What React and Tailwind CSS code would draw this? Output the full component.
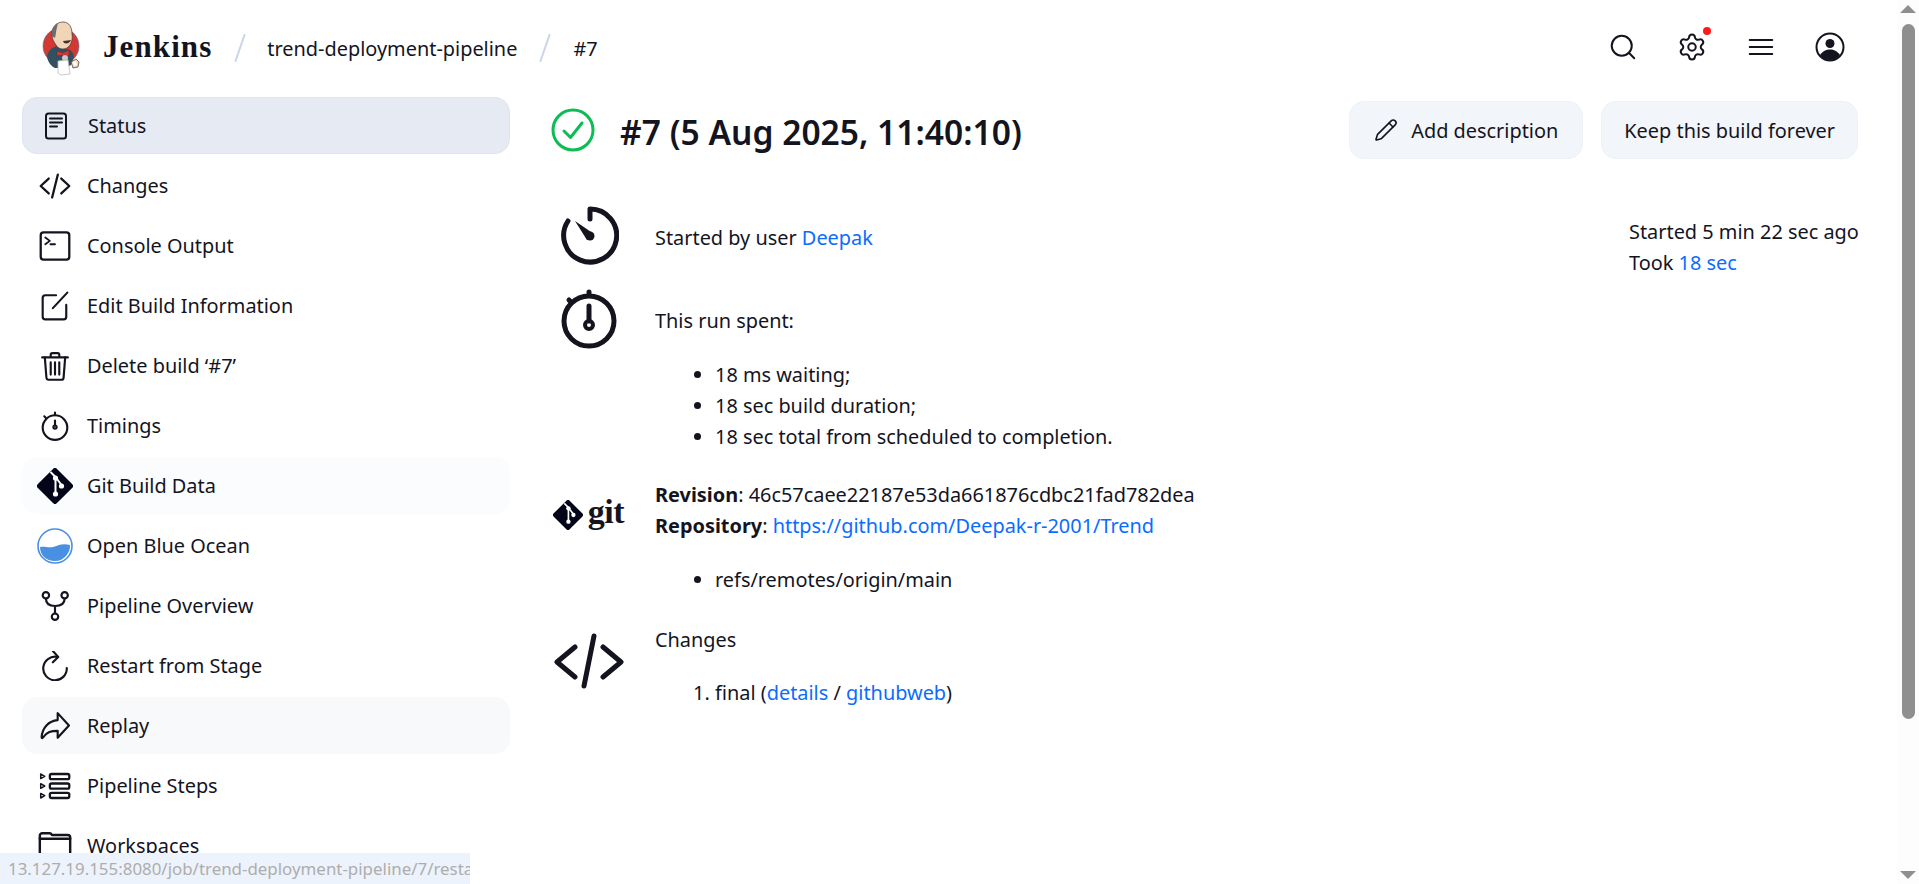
import React from 'react';
import { Search, Settings, Pencil } from 'lucide-react';

const FONT = "font-['Noto_Sans','Open_Sans',sans-serif]";

function JenkinsLogo() {
  return (
    <svg viewBox="0 0 38 55" className="w-[38px] h-[55px]">
      <circle cx="19" cy="25" r="18" fill="#d33833" stroke="#49728b" strokeWidth="0.6" />
      <path d="M5 36c1-7 6-10 10-11l9 3c4 0 7 2 8 8l-3 8-6 3-10 0c-4-2-7-6-8-11z" fill="#335061" />
      <path d="M10 14C9 6 15 1 21 1c6 0 9 5 9 12 1 6-1 11-5 14-4 2-9 1-11-3-2-3-4-6-4-10z" fill="#f0d6b7" stroke="#49312b" strokeWidth="0.7" />
      <path d="M10 15c-1-6 2-11 6-13-1 4-2 8-2 10l-1 5z" fill="#6d6b6d" />
      <path d="M21 20c3 0 6-1 8-1-1 3-4 4-7 3z" fill="#49312b" />
      <path d="M15 30l6 2 6-3 0 6-5-1-1 1-1-1-5 1z" fill="#d33833" stroke="#81100f" strokeWidth="0.4" />
      <circle cx="23" cy="37" r="3" fill="#e8e8e8" opacity="0.8" />
      <path d="M16 40l10-1 2 14-9 1-3-2z" fill="#fff" stroke="#bbb" strokeWidth="0.8" />
      <path d="M29 41l5-3 3 3-1 5-5 1z" fill="#f0d6b7" stroke="#49312b" strokeWidth="0.7" />
      <path d="M31 41l3-1 1 4-3 1z" fill="#fff" />
    </svg>
  );
}

function Icon({ children, className = 'w-7 h-7' }) {
  return (
    <svg viewBox="0 0 28 28" fill="none" stroke="#14141f" strokeWidth="2" strokeLinecap="round" strokeLinejoin="round" className={className}>
      {children}
    </svg>
  );
}

const Slash = () => (
  <svg viewBox="0 0 12 28" className="w-[12px] h-[28px]" stroke="#c9d5e6" strokeWidth="2" strokeLinecap="round">
    <path d="M10.500 1 1.500 27" />
  </svg>
);

const StatusIcon = () => (
  <Icon>
    <rect x="4" y="1.500" width="20" height="25" rx="2.500" />
    <path d="M8 6.500h12M8 10.500h12M8 14.500h7" />
  </Icon>
);
const CodeIcon = () => (
  <Icon className="w-[32px] h-[32px]">
    <path d="M8.500 7.500 1.500 14l7 6.500M19.500 7.500l7 6.500-7 6.500M16.500 4l-5 20" />
  </Icon>
);
const ConsoleIcon = () => (
  <Icon className="w-[32px] h-[32px]">
    <rect x="1.500" y="2" width="25" height="24" rx="2.500" />
    <path d="m5.500 6.500 4 3-4 3M10 12.500h4" strokeWidth="1.600" />
  </Icon>
);
const EditIcon = () => (
  <Icon className="w-[30px] h-[30px]">
    <path d="M15 4H5a2.500 2.500 0 0 0-2.500 2.500V24A2.500 2.500 0 0 0 5 26.500h17a2.500 2.500 0 0 0 2.500-2.500V13" />
    <path d="M12 16 25.500 1.500" />
  </Icon>
);
const TrashIcon = () => (
  <Icon className="w-[30px] h-[30px]">
    <path d="M2 6h24M10 6V3.500A1.500 1.500 0 0 1 11.500 2h5A1.500 1.500 0 0 1 18 3.500V6" />
    <path d="m4.500 6 1.500 19a2 2 0 0 0 2 1.800h12a2 2 0 0 0 2-1.800L23.500 6" />
    <path d="M10 10.500v11.500M14 10.500v11.500M18 10.500v11.500" />
  </Icon>
);
const TimerIcon = () => (
  <Icon className="w-[30px] h-[30px]">
    <circle cx="14" cy="15.500" r="11.500" />
    <path d="M14 4V1.500M5.500 6.500l-1.500-1.500M14 9v4" />
    <circle cx="14" cy="15" r="1.500" />
  </Icon>
);
const GitDiamond = ({ className = 'w-[36px] h-[36px]' }) => (
  <svg viewBox="0 0 36 36" className={className}>
    <path d="M16 .9 .9 16a2.800 2.800 0 0 0 0 4L16 35.100a2.800 2.800 0 0 0 4 0L35.100 20a2.800 2.800 0 0 0 0-4L20 .9a2.800 2.800 0 0 0-4 0z" fill="#05051a" />
    <path d="m13.500 4 5 5M18.500 9l6 8M18.500 9v17" stroke="#fff" strokeWidth="2" fill="none" />
    <circle cx="18.500" cy="10" r="2.600" fill="#fff" />
    <circle cx="24.500" cy="18" r="2.600" fill="#fff" />
    <circle cx="18.500" cy="26" r="2.600" fill="#fff" />
  </svg>
);
const OceanIcon = () => (
  <svg viewBox="0 0 36 36" className="w-[36px] h-[36px]">
    <circle cx="18" cy="18" r="17" fill="#fff" stroke="#4a90e2" strokeWidth="1.600" />
    <path d="M3 19c5-1 8 1 13 0s8-4 17-2c.5 8-6 16-15 16S3 27 3 19z" fill="#4a90e2" />
  </svg>
);
const PipelineIcon = () => (
  <Icon className="w-[30px] h-[30px]">
    <circle cx="5.500" cy="4" r="3" />
    <circle cx="23" cy="4" r="3" />
    <circle cx="14" cy="24" r="3" />
    <path d="M5.500 7c0 5 3 7 8.500 7s9-2 9-7M14 14v7" />
  </Icon>
);
const RestartIcon = () => (
  <Icon className="w-[30px] h-[30px]">
    <path d="M16 5.500A11 11 0 1 0 25 16" />
    <path d="m12 0 5 5.500-5 5" />
  </Icon>
);
const ReplayIcon = () => (
  <Icon className="w-[30px] h-[30px]">
    <path d="M16.500 2 27 13.500 16.500 25v-6.500c-6 0-10 1-14 6.500-.5.5-1 .3-1-.500C2 16 8 9 16.500 8.500z" />
  </Icon>
);
const StepsIcon = () => (
  <Icon className="w-[32px] h-[32px]">
    <rect x="9.500" y="3.500" width="17" height="4.500" rx="1.500" />
    <rect x="9.500" y="11.800" width="17" height="4.500" rx="1.500" />
    <rect x="9.500" y="20" width="17" height="4.500" rx="1.500" />
    <path d="m1.500 3.500 3.500 2-3.500 2zM1.500 12l3.500 2-3.500 2zM1.500 20.500l3.500 2-3.500 2z" strokeWidth="1.300" />
  </Icon>
);
const FolderIcon = () => (
  <Icon className="w-[34px] h-[34px]">
    <path d="M1.500 5.500a2 2 0 0 1 2-2h6c1 0 1.500.5 2 1.500h13a2 2 0 0 1 2 2v16a2 2 0 0 1-2 2h-21a2 2 0 0 1-2-2z" />
    <path d="M1.500 8h25" />
  </Icon>
);

const navItems = [
  { label: 'Status', icon: <StatusIcon />, bg: 'bg-[#e6eaf2] border border-[#dfe4ee]' },
  { label: 'Changes', icon: <CodeIcon /> },
  { label: 'Console Output', icon: <ConsoleIcon /> },
  { label: 'Edit Build Information', icon: <EditIcon /> },
  { label: 'Delete build ‘#7’', icon: <TrashIcon /> },
  { label: 'Timings', icon: <TimerIcon /> },
  { label: 'Git Build Data', icon: <GitDiamond />, bg: 'bg-[#fbfcfe]' },
  { label: 'Open Blue Ocean', icon: <OceanIcon /> },
  { label: 'Pipeline Overview', icon: <PipelineIcon /> },
  { label: 'Restart from Stage', icon: <RestartIcon /> },
  { label: 'Replay', icon: <ReplayIcon />, bg: 'bg-[#f8f9fb]' },
  { label: 'Pipeline Steps', icon: <StepsIcon /> },
  { label: 'Workspaces', icon: <FolderIcon /> },
];

function Link({ children }) {
  return <a className="text-[#0b6cff]">{children}</a>;
}

function BuildRow({ icon, className = '', children }) {
  return (
    <div className={`flex ${className}`}>
      <div className="w-[105px] shrink-0 flex justify-center items-start pr-[27px]">{icon}</div>
      <div className="flex-1">{children}</div>
    </div>
  );
}

export default function App() {
  return (
    <div className={`relative flex h-[884px] overflow-hidden bg-white text-[#14141f] text-[19.900px] leading-[31px] ${FONT}`}>
      <div className="flex-1 min-w-0 flex flex-col">
        {/* Header */}
        <header className="h-[96px] shrink-0 flex items-center pl-[42px] pr-[52px]">
          <JenkinsLogo />
          <span className="ml-[23px] font-['Liberation_Serif',serif] font-bold text-[31px] tracking-[1.100px] pb-[3px]">Jenkins</span>
          <span className="ml-[22px]"><Slash /></span>
          <span className="ml-[21px]">trend-deployment-pipeline</span>
          <span className="ml-[22px]"><Slash /></span>
          <span className="ml-[22px]">#7</span>
          <div className="ml-auto flex items-center gap-[39px] pb-[2px]">
            <Search className="w-[30px] h-[30px]" strokeWidth={1.600} />
            <div className="relative">
              <Settings className="w-[30px] h-[30px]" strokeWidth={1.600} />
              <span className="absolute -top-[5px] -right-[4px] w-[8px] h-[8px] rounded-full bg-[#ff1a1a]" />
            </div>
            <svg viewBox="0 0 28 28" className="w-[30px] h-[30px]" stroke="#14141f" strokeWidth="1.900" strokeLinecap="round">
              <path d="M3.500 7.500h21M3.500 14h21M3.500 20.500h21" />
            </svg>
            <svg viewBox="0 0 30 30" className="w-[30px] h-[30px]">
              <circle cx="15" cy="15" r="13.500" fill="#fff" stroke="#14141f" strokeWidth="2" />
              <circle cx="15" cy="11.500" r="4.500" fill="#14141f" />
              <path d="M5 23c3-4 6-5.500 10-5.500s7 1.500 10 5.500c-2.500 3-6 5-10 5s-7.500-2-10-5z" fill="#14141f" />
            </svg>
          </div>
        </header>

        <div className="flex flex-1 min-h-0">
          {/* Sidebar */}
          <nav className="w-[550px] shrink-0 pl-[22px] pr-[40px] pt-[1px]">
            {navItems.map((item) => (
              <div key={item.label} className={`flex items-center h-[57px] mb-[3px] rounded-[15px] ${item.bg || ''}`}>
                <div className="w-[65px] flex justify-center shrink-0">{item.icon}</div>
                <span>{item.label}</span>
              </div>
            ))}
          </nav>

          {/* Main */}
          <main className="flex-1 min-w-0 pr-[39px]">
            <div className="flex items-center justify-between pt-[5px]">
              <div className="flex items-center">
                <svg viewBox="0 0 44 44" className="w-[44px] h-[44px] ml-[1px]" fill="none" stroke="#0dbc55" strokeLinecap="round" strokeLinejoin="round">
                  <circle cx="22" cy="22" r="20" strokeWidth="3" />
                  <path d="m13 23 6.500 6.500L31 15" strokeWidth="3" />
                </svg>
                <h1 className="ml-[25px] mt-[4px] text-[33.600px] leading-[44px] font-semibold">#7 (5 Aug 2025, 11:40:10)</h1>
              </div>
              <div className="flex gap-[18px]">
                <button className="h-[58px] px-[24px] flex items-center gap-[13px] rounded-[15px] bg-[#f2f5f9] border border-[#eef1f6]">
                  <Pencil className="w-[24px] h-[24px]" strokeWidth={1.600} />
                  Add description
                </button>
                <button className="h-[58px] px-[22px] rounded-[15px] bg-[#f2f5f9] border border-[#eef1f6]">Keep this build forever</button>
              </div>
            </div>

            <div className="relative mt-[44px]">
              <div className="absolute right-0 top-[13px] w-[229px] whitespace-nowrap">
                <div>Started 5 min 22 sec ago</div>
                <div>Took <Link>18 sec</Link></div>
              </div>

              <BuildRow
                className="items-center h-[64px]"
                icon={
                  <svg viewBox="0 0 60 60" className="w-[60px] h-[60px]" fill="none" stroke="#14141f" strokeWidth="5" strokeLinecap="round">
                    <path d="M31 4a26.500 26.500 0 1 1-22 12M31 4v10" />
                    <path d="M16 16 35 29 28 35z" fill="#14141f" stroke="none" />
                    <circle cx="31" cy="31" r="4.500" fill="#14141f" stroke="none" />
                  </svg>
                }
              >
                <div className="pt-[5px]">Started by user <Link>Deepak</Link></div>
              </BuildRow>

              <BuildRow
                className="mt-[20px]"
                icon={
                  <svg viewBox="0 0 60 60" className="w-[60px] h-[60px] mt-[2px]" fill="none" stroke="#14141f" strokeWidth="5" strokeLinecap="round">
                    <circle cx="30" cy="32" r="25" />
                    <path d="M30 3v1M10 11l1 1M30 17v15" />
                    <circle cx="30" cy="36" r="4" strokeWidth="4" />
                  </svg>
                }
              >
                <p className="pt-[18px]">This run spent:</p>
                <ul className="list-disc pl-[60px] mt-[23px]">
                  <li>18 ms waiting;</li>
                  <li>18 sec build duration;</li>
                  <li>18 sec total from scheduled to completion.</li>
                </ul>
              </BuildRow>

              <BuildRow
                className="mt-[27px]"
                icon={
                  <div className="flex items-center mt-[21px] gap-[5px] -ml-[1px]">
                    <GitDiamond className="w-[30px] h-[30px]" />
                    <span className="font-['Liberation_Serif',serif] font-bold text-[34px] leading-[34px] tracking-[-0.500px] -mt-[6px]">git</span>
                  </div>
                }
              >
                <div><b className="font-bold">Revision</b>: 46c57caee22187e53da661876cdbc21fad782dea</div>
                <div><b className="font-bold">Repository</b>: <Link>https://github.com/Deepak-r-2001/Trend</Link></div>
                <ul className="list-disc pl-[60px] mt-[23px]">
                  <li>refs/remotes/origin/main</li>
                </ul>
              </BuildRow>

              <BuildRow
                className="mt-[29px]"
                icon={
                  <svg viewBox="0 0 70 56" className="w-[70px] h-[56px] mt-[9px]" fill="none" stroke="#14141f" strokeWidth="5" strokeLinecap="round" strokeLinejoin="round">
                    <path d="M21 14 3 29l18 15M49 14l18 15-18 15M40 3 30 53" />
                  </svg>
                }
              >
                <p>Changes</p>
                <ol className="list-decimal pl-[60px] mt-[22px]">
                  <li>final (<Link>details</Link> / <Link>githubweb</Link>)</li>
                </ol>
              </BuildRow>
            </div>
          </main>
        </div>
      </div>

      {/* Fake browser scrollbar */}
      <div className="relative w-[22px] shrink-0 bg-[#fdfdfd] flex flex-col items-center pt-[5px]">
        <div className="w-0 h-0 border-x-[8px] border-x-transparent border-b-[8px] border-b-[#8f8f8f]" />
        <div className="w-[13px] h-[695px] mt-[11px] rounded-full bg-[#8f8f8f]" />
        <div className="w-0 h-0 mt-auto mb-[5px] border-x-[8px] border-x-transparent border-t-[8px] border-t-[#8f8f8f]" />
      </div>

      {/* Link status bubble */}
      <div className="absolute left-0 bottom-0 w-[470px] h-[31px] overflow-hidden whitespace-nowrap bg-[#edf3fc] text-[#adadad] text-[16.900px] pl-[8px] leading-[31px]">
        13.127.19.155:8080/job/trend-deployment-pipeline/7/restart
      </div>
    </div>
  );
}
